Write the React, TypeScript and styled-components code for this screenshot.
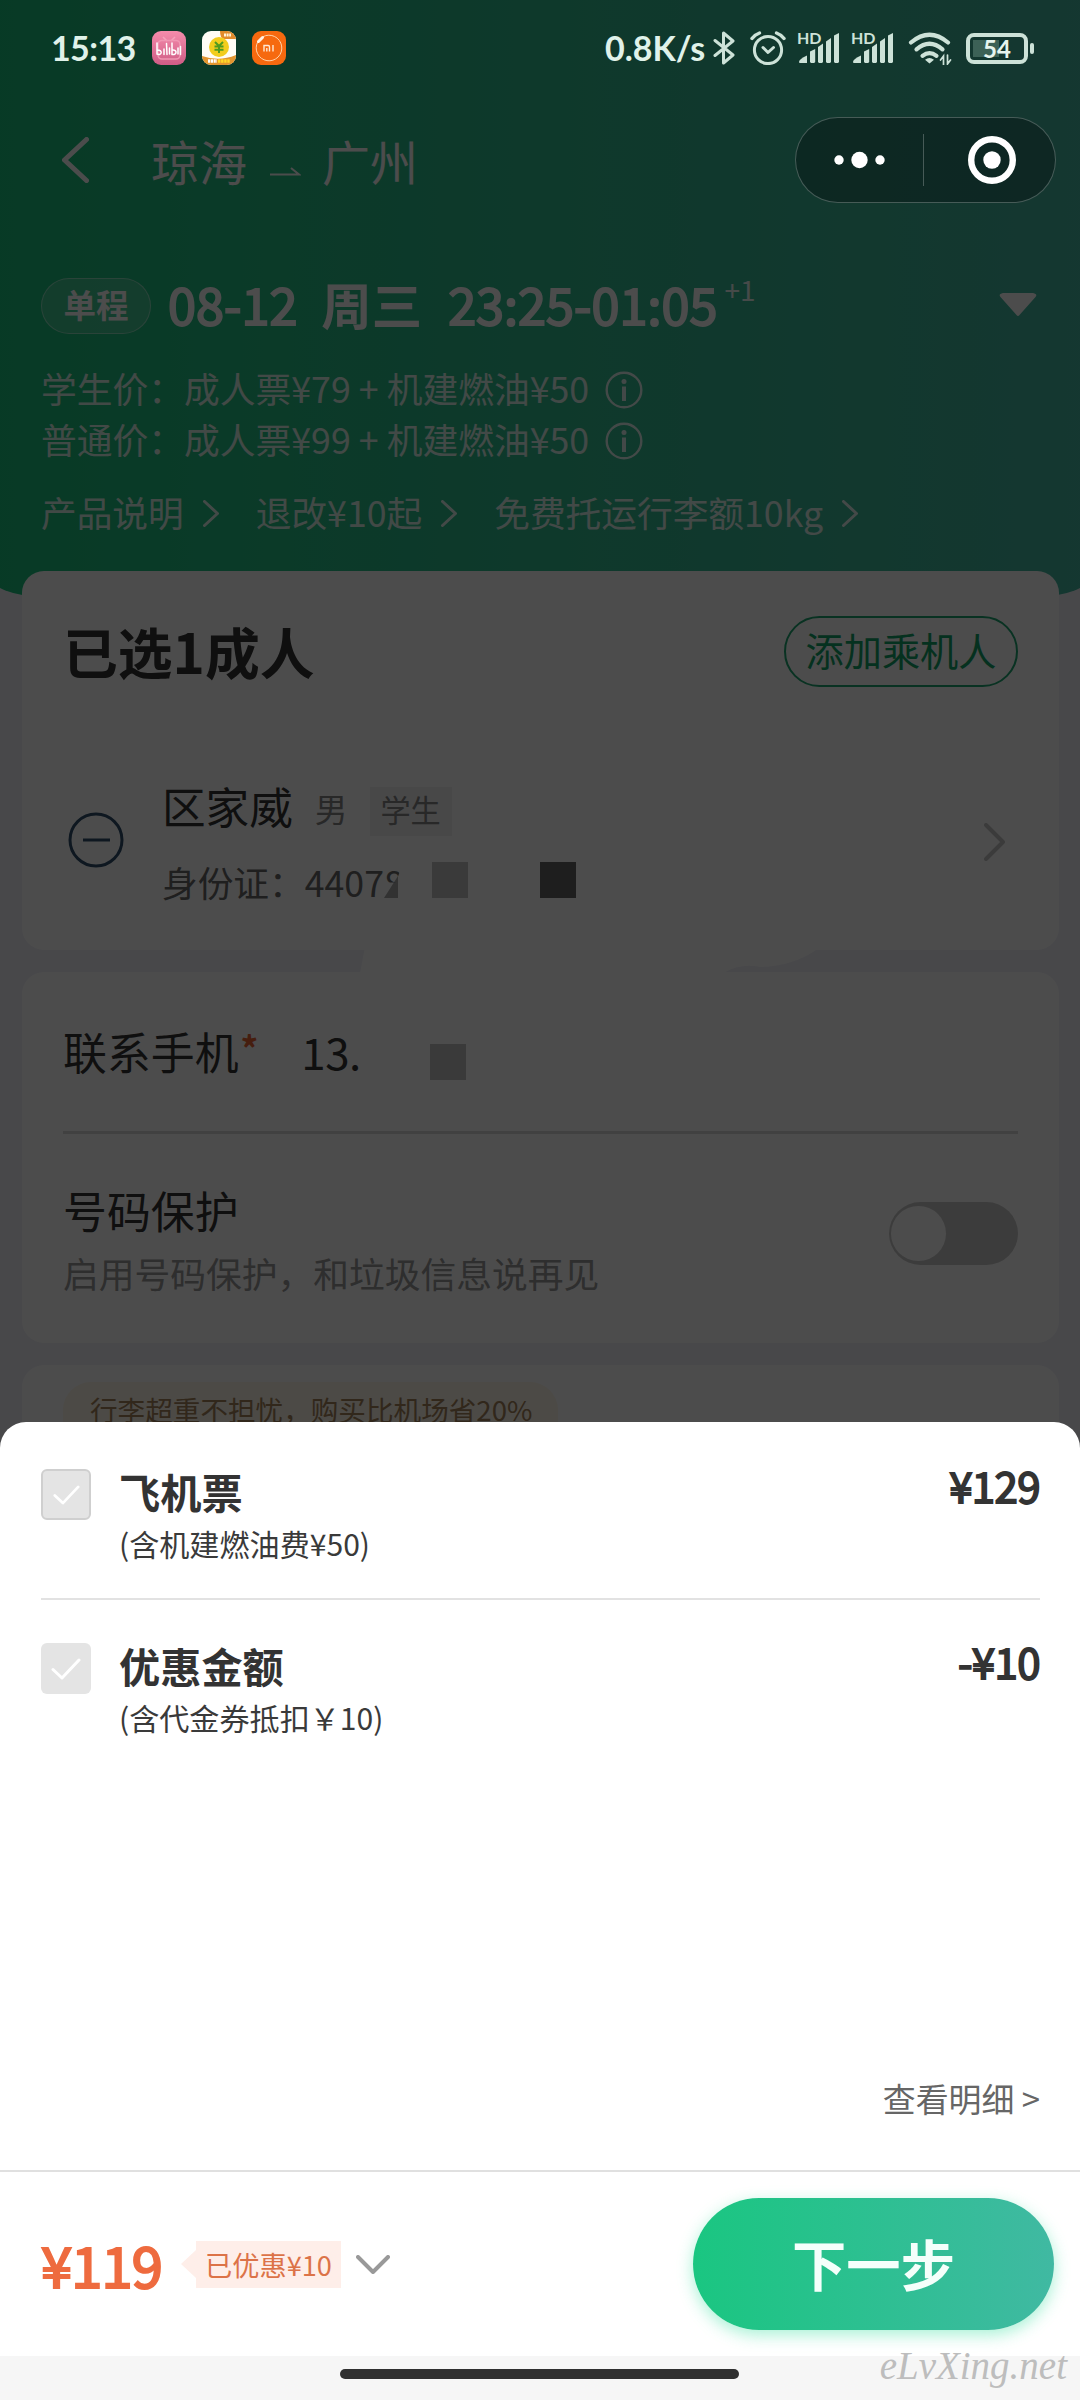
import React from "react";
import styled, { createGlobalStyle, css } from "styled-components";

const GlobalStyle = createGlobalStyle`
  * { box-sizing: border-box; }
  body {
    margin: 0;
    background: #f1f1f8;
    font-family: "Noto Sans CJK SC", "Noto Sans", sans-serif;
    color: #333;
  }
  svg { display: block; flex: none; }
`;

const Page = styled.div`
  position: relative;
  z-index: 0;
  width: 1080px;
  height: 2400px;
  overflow: hidden;
  background: #f1f1f9;
`;

const Shade = styled.div`
  position: absolute;
  inset: 0;
  z-index: 2;
  background: rgba(0, 0, 0, 0.7);
`;

/* Heavy figures keep the narrow advance of the regular weight. */
const heavyFigures = css<{ $stroke?: number }>`
  font-weight: 400;
  -webkit-text-stroke: ${(p) => p.$stroke ?? 2}px currentColor;
`;

/* ---------- header ---------- */

const Header = styled.header`
  position: relative;
  height: 571px;
  &::before {
    content: "";
    position: absolute;
    z-index: -1;
    top: 0;
    left: -11px;
    right: -11px;
    height: 597px;
    border-radius: 0 0 56px 56px / 0 0 22px 22px;
    background: linear-gradient(90deg, #1ac47e, #46b9a3);
  }
`;

const StatusBar = styled.div`
  position: relative;
  z-index: 3;
  display: flex;
  align-items: center;
  height: 96px;
  padding: 0 46px 0 51px;
  color: #e0f2ea;
`;

const StatusText = styled.span<{ $w: number }>`
  width: ${(p) => p.$w}px;
  font: 700 34px/40px Lato, sans-serif;
  white-space: nowrap;
`;

const Clock = styled(StatusText)`
  letter-spacing: -0.6px;
  margin-right: 16px;
`;

const AppIcons = styled.div`
  display: flex;
  gap: 16px;
`;

const StatusIcons = styled.div`
  display: flex;
  align-items: center;
  margin-left: auto;
`;

const NavBar = styled.nav`
  display: flex;
  align-items: center;
  height: 130px;
  padding: 0 24px 2px 62px;
`;

const RouteTitle = styled.h1`
  display: flex;
  align-items: center;
  margin: 0 auto 0 62px;
  font-size: 48px;
  line-height: 60px;
  font-weight: 400;
  color: #fff;
  svg { margin: 22px 21px 0 22px; }
`;

const Capsule = styled.div`
  position: relative;
  z-index: 3;
  display: flex;
  align-items: center;
  width: 261px;
  height: 86px;
  border: 1px solid rgba(255, 255, 255, 0.24);
  border-radius: 43px;
  background: rgba(10, 28, 26, 0.55);
`;

const CapsuleHalf = styled.div`
  flex: 1;
  display: flex;
  justify-content: center;
  & + & {
    height: 52px;
    align-items: center;
    padding-left: 4px;
    border-left: 1px solid rgba(255, 255, 255, 0.24);
  }
`;

const TripRow = styled.div`
  display: flex;
  align-items: center;
  height: 60px;
  margin-top: 50px;
  padding: 0 43px 0 41px;
  color: #fff;
  > svg { margin-bottom: 3px; }
`;

const TripType = styled.span`
  width: 110px;
  height: 56px;
  border: 1px solid rgba(255, 255, 255, 0.4);
  border-radius: 28px;
  background: rgba(255, 255, 255, 0.16);
  font-size: 32.5px;
  font-weight: 700;
  line-height: 50px;
  text-align: center;
`;

const TripTime = styled.span<{ $gap: number; $stroke?: number }>`
  margin: -4px 0 0 ${(p) => p.$gap}px;
  font-size: 50.4px;
  line-height: 60px;
  white-space: nowrap;
  ${heavyFigures}
`;

const TripDay = styled(TripTime)`
  font-weight: 700;
  -webkit-text-stroke: 0;
`;

const DayOffset = styled.sup`
  align-self: flex-start;
  margin: -5px auto 0 7px;
  font-size: 28px;
  line-height: 36px;
  opacity: 0.9;
`;

const FareList = styled.div`
  margin-top: 28px;
  padding-left: 41px;
`;

const FareRow = styled.div`
  display: flex;
  align-items: center;
  gap: 16px;
  height: 51px;
  font-size: 35.75px;
  line-height: 47px;
  color: rgba(255, 255, 255, 0.86);
  span { padding-bottom: 4px; }
`;

const LinkRow = styled.div`
  display: flex;
  align-items: center;
  height: 48px;
  margin-top: 22px;
  padding-left: 41px;
  font-size: 35.7px;
  line-height: 48px;
  color: rgba(255, 255, 255, 0.86);
`;

const HeaderLink = styled.span<{ $after: number }>`
  display: flex;
  align-items: center;
  gap: 19px;
  margin-right: ${(p) => p.$after}px;
  white-space: nowrap;
  svg { margin-top: 2px; }
`;

/* ---------- cards ---------- */

const Cards = styled.main`
  position: relative;
  display: flex;
  flex-direction: column;
  gap: 22px;
  padding: 0 21px 0 22px;
`;

const Card = styled.section<{ $h: number }>`
  height: ${(p) => p.$h}px;
  padding: 0 41px;
  border-radius: 22px;
  background: #fff;
`;

const Smear = styled.svg`
  position: absolute;
  left: 360px;
  top: 376px;
`;

const CardHead = styled.div`
  display: flex;
  align-items: center;
  justify-content: space-between;
  padding-top: 45px;
  h2 {
    margin: -3px 0 0;
    font-size: 54.8px;
    line-height: 71px;
  }
`;

const AddButton = styled.button`
  width: 234px;
  height: 71px;
  padding: 0 0 3px;
  border: 2px solid #1fa873;
  border-radius: 36px;
  background: none;
  font: 400 38.2px/60px "Noto Sans CJK SC", sans-serif;
  color: #12a468;
  white-space: nowrap;
`;

const Passenger = styled.div`
  display: flex;
  align-items: center;
  height: 126px;
  margin-top: 92px;
  padding: 0 13px 0 5px;
`;

const MinusIcon = styled.svg`
  margin-top: -4px;
`;

const PassengerInfo = styled.div`
  flex: 1;
  margin-left: 38px;
`;

const NameLine = styled.div`
  display: flex;
  align-items: center;
  height: 50px;
  margin-bottom: 31px;
  strong { font-size: 43.6px; font-weight: 400; line-height: 50px; }
  em { margin: 6px 22px 0 22px; font-size: 32.8px; font-style: normal; line-height: 46px; color: #888; }
`;

const Badge = styled.span`
  width: 82px;
  height: 49px;
  margin-top: 13px;
  background: #f1f1f1;
  font-size: 30.2px;
  line-height: 45px;
  text-align: center;
  color: #858585;
`;

const IdLine = styled.div`
  display: flex;
  height: 44px;
  font-size: 35.7px;
  line-height: 42px;
  color: #686868;
`;

const CutDigit = styled.span`
  clip-path: polygon(0 0, 100% 0, 60% 50%, 0 50%);
`;

const Wedge = styled.svg`
  margin: 15px 0 0 -20px;
`;

const Mosaic = styled.i<{ $dark?: boolean; $left: number; $top: number }>`
  width: 36px;
  height: 36px;
  margin: ${(p) => p.$top}px 0 0 ${(p) => p.$left}px;
  background: ${(p) => (p.$dark ? "#666" : "#c4c4c4")};
`;

const PhoneRow = styled.div`
  display: flex;
  align-items: center;
  height: 159px;
  padding-bottom: 2px;
  font-size: 43.9px;
  line-height: 60px;
  sup { align-self: flex-start; margin: 50px 0 0 2px; font-size: 35px; line-height: 50px; font-weight: 700; color: #ec6433; }
  b { width: 60px; margin-left: 43px; font-weight: 400; letter-spacing: -0.5px; }
`;

const ProtectRow = styled.div`
  display: flex;
  align-items: flex-start;
  justify-content: space-between;
  height: 209px;
  padding-top: 46px;
  border-top: 3px solid #dadada;
`;

const ProtectTitle = styled.div`
  font-size: 43.9px;
  line-height: 60px;
`;

const ProtectHint = styled.div`
  margin-top: 8px;
  font-size: 35.75px;
  line-height: 50px;
  color: #999;
`;

const Toggle = styled.div`
  width: 129px;
  height: 63px;
  margin-top: 22px;
  padding: 4px 2px;
  border-radius: 32px;
  background: #cacaca;
  &::before {
    content: "";
    display: block;
    width: 55px;
    height: 55px;
    border-radius: 50%;
    background: #fff;
  }
`;

const LuggageTag = styled.div`
  width: 495px;
  height: 56px;
  margin-top: 17px;
  padding-left: 27px;
  border-radius: 28px 28px 0 0;
  background: #fff8ea;
  font-size: 27.6px;
  line-height: 54px;
  color: #a5835b;
  white-space: nowrap;
`;

/* ---------- bottom sheet ---------- */

const Sheet = styled.div`
  position: absolute;
  z-index: 4;
  left: 0;
  right: 0;
  bottom: 0;
  height: 978px;
  display: flex;
  flex-direction: column;
  border-radius: 26px 26px 0 0;
  background: #fff;
`;

const PriceItem = styled.div<{ $last?: boolean }>`
  display: flex;
  align-items: flex-start;
  margin: 0 40px 0 41px;
  height: ${(p) => (p.$last ? 174 : 178)}px;
  padding-top: ${(p) => (p.$last ? 43 : 47)}px;
  ${(p) =>
    !p.$last &&
    css`
      border-bottom: 2px solid #e2e2e2;
    `}
`;

const CheckBox = styled.div<{ $bordered?: boolean }>`
  display: flex;
  align-items: center;
  justify-content: center;
  width: 50px;
  height: 51px;
  border: ${(p) => (p.$bordered ? "2px solid #cfcfcf" : "0")};
  border-radius: 6px;
  background: #e4e4e4;
`;

const ItemText = styled.div`
  flex: 1;
  margin: -5px 0 0 28px;
  strong { display: block; font-size: 41.2px; line-height: 54px; }
  small { display: block; font-size: 30.1px; line-height: 51px; color: #3a3a3a; }
`;

const Amount = styled.div<{ $drop: number; $stroke?: number }>`
  margin-top: ${(p) => p.$drop - 11}px;
  font-size: 42px;
  line-height: 54px;
  letter-spacing: -0.6px;
  ${heavyFigures}
`;

const DetailLink = styled.a`
  margin: auto 40px 47px auto;
  font-size: 32.9px;
  line-height: 50px;
  color: #666;
`;

const Footer = styled.footer`
  display: flex;
  align-items: center;
  height: 186px;
  padding: 0 26px 0 41px;
  border-top: 2px solid #e0e0e0;
`;

const Total = styled.div<{ $stroke?: number }>`
  width: 140px;
  padding-bottom: 1px;
  font-size: 56px;
  line-height: 70px;
  letter-spacing: -0.8px;
  color: #ee6b3f;
  ${heavyFigures}
`;

const Saved = styled.div`
  display: flex;
  align-items: center;
  margin-right: 15px;
  span {
    width: 145px;
    height: 47px;
    background: #feeee9;
    font-size: 27.2px;
    line-height: 46px;
    text-align: center;
    color: #dc7348;
    white-space: nowrap;
  }
`;

const NextButton = styled.button`
  width: 361px;
  height: 132px;
  margin: 0 0 0 auto;
  padding: 0 0 2px;
  border: 0;
  border-radius: 66px;
  background: linear-gradient(90deg, #1ac681, #40b9a2);
  box-shadow: 0 5px 16px rgba(38, 220, 150, 0.4);
  font: 700 54.3px/80px "Noto Sans CJK SC", sans-serif;
  color: #f4fffb;
`;

const GestureBar = styled.div`
  display: flex;
  justify-content: center;
  height: 44px;
  padding: 13px 2px 0 0;
  background: #f6f6f6;
  &::before {
    content: "";
    width: 399px;
    height: 10px;
    border-radius: 5px;
    background: #303030;
  }
`;

const Watermark = styled.div`
  position: absolute;
  right: 13px;
  bottom: 8px;
  font: italic 400 39px/52px "Liberation Serif", serif;
  color: #bdbdbd;
`;

/* ---------- icons ---------- */

const Chevron = ({ w, h, sw, color = "currentColor", dir = "right" }: { w: number; h: number; sw: number; color?: string; dir?: "right" | "left" | "down" }) => {
  const o = sw / 2;
  const points = {
    right: `${o},${o} ${w - o},${h / 2} ${o},${h - o}`,
    left: `${w - o},${o} ${o},${h / 2} ${w - o},${h - o}`,
    down: `${o},${o} ${w / 2},${h - o} ${w - o},${o}`,
  }[dir];
  return (
    <svg width={w} height={h} fill="none" stroke={color} strokeWidth={sw} strokeLinecap="round" strokeLinejoin="round">
      <polyline points={points} />
    </svg>
  );
};

const InfoIcon = () => (
  <svg width="38" height="38" viewBox="0 0 38 38" fill="none" stroke="currentColor">
    <circle cx="19" cy="19" r="17.3" strokeWidth="2.4" />
    <path d="M19 15.5V30" strokeWidth="4" />
    <circle cx="19" cy="10.4" r="2.5" fill="currentColor" stroke="none" />
  </svg>
);

const VideoApp = () => (
  <svg width="34" height="34" viewBox="0 0 34 34">
    <defs>
      <linearGradient id="pink" x1="0" y1="0" x2="0" y2="1">
        <stop offset="0" stopColor="#f58cab" />
        <stop offset="1" stopColor="#cf5c86" />
      </linearGradient>
    </defs>
    <rect width="34" height="34" rx="9" fill="url(#pink)" />
    <path d="M11 6l4 4M23 6l-4 4" stroke="#f7a3bd" strokeWidth="1.6" />
    <rect x="6" y="9.5" width="22" height="18.5" rx="4" fill="none" stroke="#f096b2" strokeWidth="1.6" />
    <g fill="none" stroke="#fff" strokeWidth="1.5" strokeLinecap="round">
      <path d="M5 12v11c5 2 6-4 .5-4M12 18v5.500M14.500 12.500l.5 11M17.500 17v6M20 12v11.500c5 1 5.500-5 .5-4.500M26 17v6M28.500 15.500v8" />
    </g>
  </svg>
);

const CoinApp = () => (
  <svg width="34" height="34" viewBox="0 0 34 34">
    <clipPath id="coin"><rect width="34" height="34" rx="9" /></clipPath>
    <g clipPath="url(#coin)">
      <rect width="34" height="34" fill="#fffdf5" />
      <path d="M18 0h16v8H22q-4-1-4-8z" fill="#e08b2c" />
      <path d="M22 4h7" stroke="#fff3d8" strokeWidth="3" strokeDasharray="2 .6" />
      <path d="M0 25q17 6 34-1v10H0z" fill="#e2952f" />
      <circle cx="17" cy="16" r="10" fill="#f2cd1d" />
      <path d="M13 11l4 4 4-4M17 15v7M12.500 15.500h9M12.500 18.800h9" fill="none" stroke="#4f9a1f" strokeWidth="2" />
      <path d="M6 30h9" stroke="#fff" strokeWidth="3.5" strokeDasharray="2.2 .6" />
      <path d="M16 30h12" stroke="#ffd927" strokeWidth="3.5" strokeDasharray="2.4 .7" />
    </g>
  </svg>
);

const MiApp = () => (
  <svg width="34" height="34" viewBox="0 0 34 34">
    <rect width="34" height="34" rx="9" fill="#f6690f" />
    <path d="M11 5.700A12.800 12.800 0 1 1 5.700 11" fill="none" stroke="#ffd2a8" strokeWidth="1" />
    <path d="M6.500 10.500l4-4" stroke="#fff3e6" strokeWidth="3" strokeLinecap="round" />
    <path d="M12 20.500v-6h4.200q1.300 0 1.300 1.500v4.500M14.800 17v3.500M21 14v6.500" fill="none" stroke="#ffe8d4" strokeWidth="1.4" />
  </svg>
);

const Bluetooth = () => (
  <svg width="22" height="34" viewBox="0 0 22 34" fill="none" stroke="#cde2d8" strokeWidth="3" strokeLinejoin="round" strokeLinecap="round">
    <path d="M2 9.500L20 24l-9.500 8V2L20 10 2 24.500" />
  </svg>
);

const Alarm = () => (
  <svg width="36" height="34" viewBox="0 0 36 34" fill="none" stroke="#cde2d8" strokeLinecap="round" strokeLinejoin="round">
    <circle cx="18" cy="19" r="13.6" strokeWidth="3" />
    <path d="M13 16.500l5 5 5.500-5" strokeWidth="3" />
    <path d="M2 7.500q3-4 7.500-5.500M34 7.500q-3-4-7.500-5.500" strokeWidth="3.4" />
  </svg>
);

const SignalBox = styled.div`
  position: relative;
  width: 42px;
  height: 34px;
  span {
    position: absolute;
    left: -1px;
    top: -1px;
    font: 700 16px/15px Lato, sans-serif;
    color: #cde2d8;
  }
`;

const Signal = () => (
  <SignalBox>
    <span>HD</span>
    <svg width="42" height="34" viewBox="0 0 42 34" fill="#cde2d8">
      <path d="M1 31q0-3 8-6.500v7.500H2q-1 0-1-1z" />
      <path d="M12 20.500l5.200-2.500v13l-1 1h-3.200l-1-1z" />
      <path d="M20 16l5-3.500V31l-1 1h-3l-1-1z" />
      <path d="M28 10.500L33 7v24l-1 1h-3l-1-1z" />
      <path d="M36 4.500L41 2v29l-1 1h-3l-1-1z" />
    </svg>
  </SignalBox>
);

const Wifi = () => (
  <svg width="44" height="34" viewBox="0 0 44 34" fill="none" stroke="#cde2d8" strokeLinecap="round">
    <path d="M3 11.500q18.500-15.500 37 0" strokeWidth="4.2" />
    <path d="M8.500 18.300q13-11 26 0" strokeWidth="4.2" />
    <path d="M14.500 24.800q7-5.500 14 0" strokeWidth="4.2" />
    <path d="M21.500 32.500l-4.500-3.800q4.500-3.500 9 0z" fill="#cde2d8" stroke="none" />
    <path d="M35.500 34V25l-3 4M39.500 24v9l3-4" strokeWidth="1.7" />
  </svg>
);

const BatteryBox = styled.div`
  display: flex;
  align-items: center;
  gap: 2px;
  &::after { content: ""; width: 4px; height: 11px; border-radius: 2px; background: #cde2d8; }
`;

const BatteryCell = styled.div`
  display: flex;
  align-items: center;
  justify-content: center;
  width: 62px;
  height: 31px;
  border: 4px solid #cde2d8;
  border-radius: 8px;
  background: linear-gradient(#3c6156, #3c6156) no-repeat 3px 3px / 26px 17px;
  font: 700 24px/23px Lato, sans-serif;
  color: #e6f4ee;
`;

const Spacer = styled.i<{ $w: number }>`
  width: ${(p) => p.$w}px;
`;

/* ---------- page ---------- */

const items = [
  { name: "飞机票", note: "(含机建燃油费¥50)", amount: "¥129" },
  { name: "优惠金额", note: "(含代金券抵扣￥10)", amount: "-¥10" },
];

export default function App() {
  return (
    <Page>
      <GlobalStyle />
      <Header>
        <StatusBar>
          <Clock $w={85}>15:13</Clock>
          <AppIcons>
            <VideoApp />
            <CoinApp />
            <MiApp />
          </AppIcons>
          <StatusIcons>
            <StatusText $w={108}>0.8K/s</StatusText>
            <Bluetooth />
            <Spacer $w={15} />
            <Alarm />
            <Spacer $w={12} />
            <Signal />
            <Spacer $w={12} />
            <Signal />
            <Spacer $w={14} />
            <Wifi />
            <Spacer $w={14} />
            <BatteryBox>
              <BatteryCell>54</BatteryCell>
            </BatteryBox>
          </StatusIcons>
        </StatusBar>

        <NavBar>
          <Chevron w={27} h={46} sw={5} color="#fff" dir="left" />
          <RouteTitle>
            琼海
            <svg width="32" height="9" viewBox="0 0 32 9" fill="none" stroke="#fff" strokeWidth="2">
              <path d="M1 7.500h29L22 1" />
            </svg>
            广州
          </RouteTitle>
          <Capsule>
            <CapsuleHalf>
              <svg width="52" height="18" fill="#fff">
                <circle cx="5" cy="9" r="4.7" />
                <circle cx="25.5" cy="9" r="8.2" />
                <circle cx="46" cy="9" r="4.7" />
              </svg>
            </CapsuleHalf>
            <CapsuleHalf>
              <svg width="48" height="48" fill="none" stroke="#fff">
                <circle cx="24" cy="24" r="20.8" strokeWidth="6.4" />
                <circle cx="24" cy="24" r="8.7" fill="#fff" stroke="none" />
              </svg>
            </CapsuleHalf>
          </Capsule>
        </NavBar>

        <TripRow>
          <TripType>单程</TripType>
          <TripTime $gap={17}>08-12</TripTime>
          <TripDay $gap={24}>周三</TripDay>
          <TripTime $gap={26}>23:25-01:05</TripTime>
          <DayOffset>+1</DayOffset>
          <svg width="38" height="24" viewBox="0 0 38 24" fill="#fff">
            <path d="M4 0h30q5 1 2.500 4L20.500 22q-1.500 2-3 0L1.500 4Q-1 1 4 0z" />
          </svg>
        </TripRow>

        <FareList>
          <FareRow>
            <span>学生价：成人票¥79 + 机建燃油¥50</span>
            <InfoIcon />
          </FareRow>
          <FareRow>
            <span>普通价：成人票¥99 + 机建燃油¥50</span>
            <InfoIcon />
          </FareRow>
        </FareList>

        <LinkRow>
          <HeaderLink $after={37}>产品说明<Chevron w={16} h={27} sw={3} /></HeaderLink>
          <HeaderLink $after={37}>退改¥10起<Chevron w={16} h={27} sw={3} /></HeaderLink>
          <HeaderLink $after={0}>免费托运行李额10kg<Chevron w={16} h={27} sw={3} /></HeaderLink>
        </LinkRow>
      </Header>

      <Cards>
        <Card $h={379}>
          <CardHead>
            <h2>已选1成人</h2>
            <AddButton>添加乘机人</AddButton>
          </CardHead>
          <Passenger>
            <MinusIcon width="56" height="56" fill="none" stroke="#304f6c" strokeWidth="3">
              <circle cx="28" cy="28" r="26" />
              <path d="M15 28h27" />
            </MinusIcon>
            <PassengerInfo>
              <NameLine>
                <strong>区家威</strong>
                <em>男</em>
                <Badge>学生</Badge>
              </NameLine>
              <IdLine>
                身份证：4407<CutDigit>8</CutDigit>
                <Wedge width="14" height="22" fill="#a8a8a8"><polygon points="0,22 14,0 14,22" /></Wedge>
                <Mosaic $left={34} $top={1} />
                <Mosaic $left={72} $top={1} $dark />
              </IdLine>
            </PassengerInfo>
            <Chevron w={21} h={38} sw={4} color="#c6c6c6" />
          </Passenger>
        </Card>

        <Card $h={371}>
          <PhoneRow>
            联系手机<sup>*</sup>
            <b>13.</b>
            <Mosaic $left={69} $top={22} />
          </PhoneRow>
          <ProtectRow>
            <div>
              <ProtectTitle>号码保护</ProtectTitle>
              <ProtectHint>启用号码保护，和垃圾信息说再见</ProtectHint>
            </div>
            <Toggle />
          </ProtectRow>
        </Card>

        <Card $h={200}>
          <LuggageTag>行李超重不担忧，购买比机场省20%</LuggageTag>
        </Card>

        <Smear width="460" height="28" fill="#fff">
          <path d="M5 0H460C440 16 415 20 400 20Q380 16 364 26H0z" />
        </Smear>
      </Cards>

      <Shade />

      <Sheet>
        {items.map((item, i) => (
          <PriceItem key={item.name} $last={i === items.length - 1}>
            <CheckBox $bordered={i === 0}>
              <svg width={i ? 30 : 27} height={i ? 22 : 20} viewBox="0 0 30 22" fill="none" stroke="#fff" strokeWidth="3" strokeLinecap="round" strokeLinejoin="round">
                <path d="M2 11.500L11 20 28 2" />
              </svg>
            </CheckBox>
            <ItemText>
              <strong>{item.name}</strong>
              <small>{item.note}</small>
            </ItemText>
            <Amount $drop={i * 2} $stroke={1.8}>{item.amount}</Amount>
          </PriceItem>
        ))}
        <DetailLink>查看明细 &gt;</DetailLink>
        <Footer>
          <Total $stroke={2.2}>¥119</Total>
          <Saved>
            <svg width="15" height="28" fill="#feeee9"><polygon points="15,0 0,14 15,28" /></svg>
            <span>已优惠¥10</span>
          </Saved>
          <Chevron w={34} h={19} sw={4} color="#999" dir="down" />
          <NextButton>下一步</NextButton>
        </Footer>
        <GestureBar />
        <Watermark>eLvXing.net</Watermark>
      </Sheet>
    </Page>
  );
}
